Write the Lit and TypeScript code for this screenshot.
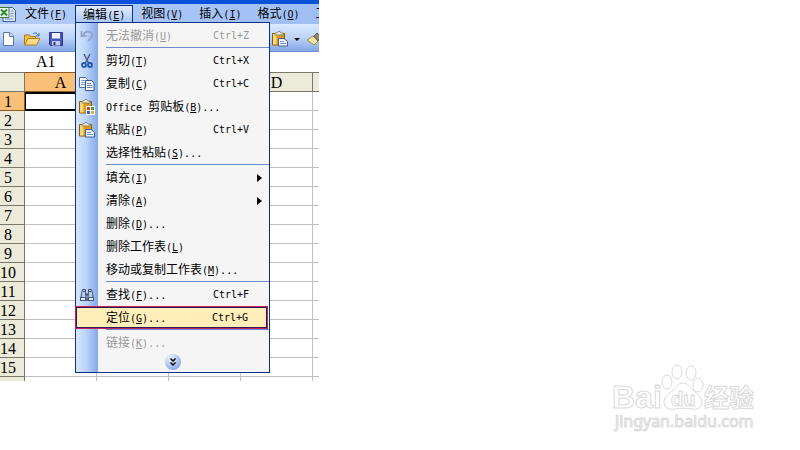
import { LitElement, html, svg, css, nothing } from "lit";
import { customElement } from "lit/decorators.js";
import { classMap } from "lit/directives/class-map.js";

interface Item {
  text: string;
  key: string;
  tail?: string;
  shortcut?: string;
  icon?: string;
  sub?: boolean;
  off?: boolean;
  active?: boolean;
}

const GROUPS: Item[][] = [
  [{ text: "无法撤消", key: "U", shortcut: "Ctrl+Z", icon: "undo", off: true }],
  [
    { text: "剪切", key: "T", shortcut: "Ctrl+X", icon: "cut" },
    { text: "复制", key: "C", shortcut: "Ctrl+C", icon: "copy" },
    { text: "Office 剪贴板", key: "B", tail: "...", icon: "clipboard" },
    { text: "粘贴", key: "P", shortcut: "Ctrl+V", icon: "paste" },
    { text: "选择性粘贴", key: "S", tail: "..." },
  ],
  [
    { text: "填充", key: "I", sub: true },
    { text: "清除", key: "A", sub: true },
    { text: "删除", key: "D", tail: "..." },
    { text: "删除工作表", key: "L" },
    { text: "移动或复制工作表", key: "M", tail: "..." },
  ],
  [
    { text: "查找", key: "F", tail: "...", shortcut: "Ctrl+F", icon: "find" },
    { text: "定位", key: "G", tail: "...", shortcut: "Ctrl+G", active: true },
  ],
  [{ text: "链接", key: "K", tail: "...", off: true }],
];

const board = svg`
  <path d="M.5 2.500h12v11.500H.5z" fill="#d99a26" stroke="#8a5a10"/>
  <path d="M1 3h3.500v10.500H1z" fill="#f9d878"/>
  <path d="M3 4V2h2l1-1.500h2L9 2h2v2z" fill="#e8e4d0" stroke="#77705a" stroke-width=".7"/>`;

const ICONS: Record<string, unknown> = {
  undo: svg`<path d="M2.500 3v5h5" fill="none" stroke="#95a5cd" stroke-width="2"/>
    <path d="M4 7c3-5 9-4 9 0 0 3-2 4-4 6" fill="none" stroke="#95a5cd" stroke-width="2"/>`,
  cut: svg`<path d="M5 1l4.500 9M11 1L6.500 10" fill="none" stroke="#4b5c80" stroke-width="1.500"/>
    <circle cx="5" cy="12" r="2" fill="none" stroke="#2458b0" stroke-width="1.800"/>
    <circle cx="11" cy="12" r="2" fill="none" stroke="#2458b0" stroke-width="1.800"/>`,
  copy: svg`<path d="M.5 1.500h6l2 2v8h-8z" fill="#fff" stroke="#49699f"/>
    <path d="M2 4.500h4M2 6.500h5M2 8.500h5" stroke="#7c9ed6"/>
    <path d="M6.500 4.500h6l2.500 2.500v7.500H6.500z" fill="#fff" stroke="#34558f"/>
    <path d="M8 7.500h4M8 9.500h5.500M8 11.500h5.500" stroke="#5f86c8"/>`,
  clipboard: svg`${board}
    <path d="M7 7h9v9H7z" fill="#fff"/>
    <path d="M8 8h3v3H8z" fill="#d8402a"/><path d="M12 8h3v3h-3z" fill="#48a040"/>
    <path d="M8 12h3v3H8z" fill="#2f66d0"/><path d="M12 12h3v3h-3z" fill="#e8b020"/>`,
  paste: svg`${board}
    <path d="M6.500 7.500h5.500l3.500 3v4.500h-9z" fill="#f4f8ff" stroke="#44608f"/>
    <path d="M8 10.500h4M8 12.500h6" stroke="#6d8fc8"/>`,
  find: svg`<path d="M3.500 2.500h3v3l1 8h-6l1-7zM9.500 2.500h3l1 4 1 7h-6l1-8z" fill="#b9cdf0" stroke="#3c5174"/>
    <path d="M1.500 10.500h5v3h-5zM9.500 10.500h5v3h-5z" fill="#edf3ff" stroke="#3c5174"/>
    <path d="M6.500 6.500h3v2h-3z" fill="#3c5174"/>
    <path d="M4 4.500h2M10 4.500h2" stroke="#3c5174"/>`,
  page: svg`<path d="M3.500 1.500h6.500l3.500 3.500v9.500h-10z" fill="#fff" stroke="#5b78ad"/>
    <path d="M9.500 1.500V5.500h4" fill="#cfdef6" stroke="#5b78ad"/>`,
  open: svg`<path d="M.5 14V4h5l1 1.500h5V8" fill="#f0c050" stroke="#b07c14"/>
    <path d="M.5 14L4 7.500h12L12.500 14z" fill="#ffdb80" stroke="#b07c14"/>
    <path d="M9 3c2-2 4-1 5 1M15 2v3h-3" fill="none" stroke="#3c68b8"/>`,
  save: svg`<path d="M1.500 1.500h13v13h-12l-1-1z" fill="#4a55b8" stroke="#2d378c"/>
    <path d="M4 2h8v5.500H4z" fill="#f2f5ff"/><path d="M4 10h8v4.500H4z" fill="#c4cdec"/>
    <path d="M5.500 11h2v3h-2z" fill="#2d378c"/>`,
  brush: svg`<path d="M1 9l6-4 5 5-4 4z" fill="#f3e6a0" stroke="#a38a3c"/>
    <path d="M8 5l3-3 4 4-3 4z" fill="#8f8a78" stroke="#5d5a4c"/>`,
  excel: svg`<path d="M5 1.500h7.500l3 3v11H3v-4" fill="#dfe9fb" stroke="#3f5f9a"/>
    <path d="M10.500 5h3M10.500 7.500h3M10.500 10h3M5 13h8" stroke="#6e8ec4"/>
    <path d="M-1 1.500h10v10H-1z" fill="#eef6ea" stroke="#3c7a3a"/>
    <path d="M1 3.500l6 6M7 3.500l-6 6" stroke="#2f8a35" stroke-width="2"/>`,
};

const icon = (name: string) =>
  html`<svg class="icon" viewBox="0 0 16 16" aria-hidden="true">${ICONS[name]}</svg>`;

const mixed = (text: string) =>
  text
    .split(/([ -~]+)/)
    .filter(Boolean)
    .map((part) => (/^[ -~]/.test(part) ? html`<span class="latin">${part}</span>` : part));

const label = (text: string, key: string, tail = "") =>
  html`<span class="label">${mixed(text)}<span class="latin">(<u>${key}</u>)${tail}</span></span>`;

const base = css`
  *, *::before { box-sizing: border-box; }
  button {
    margin: 0;
    padding: 0;
    border: 0;
    background: none;
    color: inherit;
    font: inherit;
    text-align: left;
    white-space: nowrap;
  }
  .icon { display: block; width: 16px; height: 16px; flex: none; }
  .latin { font-family: "DejaVu Sans Mono", monospace; font-size: 10px; white-space: pre; }
  u { text-underline-offset: 1px; }
`;

@customElement("edit-menu")
export class EditMenu extends LitElement {
  static styles = [
    base,
    css`
      :host {
        display: block;
        box-sizing: border-box;
        width: 195px;
        padding-top: 1px;
        border: 1px solid #0a2f86;
        background: linear-gradient(90deg, #d5e5fd, #bcd4f8 10px, #84a8e8 22px, #f5f5f5 22px);
      }
      .group + .group::before {
        content: "";
        display: block;
        height: 2px;
        margin-left: 30px;
        border-top: 1px solid #6a8ccb;
      }
      .item {
        display: flex;
        align-items: center;
        width: 100%;
        height: 23px;
        padding: 0 10px 0 3px;
      }
      .item:disabled { color: #989898; }
      .slot { width: 27px; flex: none; }
      .label { flex: 1; }
      .shortcut { width: 46px; }
      .arrow {
        border: 4px solid transparent;
        border-left: 5px solid #000;
        border-right: 0;
        margin-right: -3px;
      }
      .active {
        width: 193px;
        margin-left: -1px;
        padding: 0 9px 0 3px;
        border: 1px solid #c4205a;
        box-shadow: inset 0 0 0 1px #2b1a55;
        background: #ffedba;
      }
      .more { display: flex; justify-content: center; width: 100%; height: 18px; }
      .chevron { width: 16px; height: 16px; }
    `,
  ];

  render() {
    return html`<div role="menu">
      ${GROUPS.map(
        (group) => html`<div class="group" role="group">
          ${group.map(
            (item) => html`<button
              role="menuitem"
              class=${classMap({ item: true, active: !!item.active })}
              ?disabled=${item.off}
            >
              <span class="slot">${item.icon ? icon(item.icon) : nothing}</span>
              ${label(item.text, item.key, item.tail)}
              ${item.shortcut ? html`<span class="shortcut latin">${item.shortcut}</span>` : nothing}
              ${item.sub ? html`<span class="arrow"></span>` : nothing}
            </button>`
          )}
        </div>`
      )}
      <button class="more" aria-label="展开">
        <svg class="chevron" viewBox="0 0 16 16">
          <defs>
            <radialGradient id="ball" cx=".35" cy=".25" r=".8">
              <stop offset="0" stop-color="#edf4ff" /><stop offset="1" stop-color="#84a8e8" />
            </radialGradient>
          </defs>
          <circle cx="8" cy="8" r="8" fill="url(#ball)" />
          <path d="M5.500 4.500L8 7l2.500-2.500M5.500 8.500L8 11l2.500-2.500" fill="none" stroke="#000" stroke-width="1.500" />
        </svg>
      </button>
    </div>`;
  }
}

@customElement("app-root")
export class AppRoot extends LitElement {
  static styles = [
    base,
    css`
      :host {
        display: grid;
        grid-template-columns: minmax(0, 319fr) minmax(0, 481fr);
        min-height: 100vh;
        background: #fff;
        color: #000;
        font: 12px/16px "Noto Sans CJK SC", sans-serif;
      }
      .bars { overflow: hidden; }
      .window { position: relative; min-width: 0; }
      .title { height: 4px; background: #0a50d8; }
      .menubar {
        display: flex;
        height: 20px;
        padding-top: 1px;
        background: linear-gradient(90deg, #b4cdf7, #9ebef5);
      }
      .app { width: 17px; flex: none; padding-top: 1px; }
      .entry { flex: none; height: 18px; padding: 0 8px; }
      .open {
        border: 1px solid #0a2f86;
        border-bottom: 0;
        padding: 0 7px;
        background: linear-gradient(#e2edff, #a9c6f5);
      }
      .toolbar {
        display: flex;
        justify-content: space-between;
        height: 28px;
        padding-top: 2px;
        background: linear-gradient(#dbe9fe, #bcd3f8 50%, #84a8e6 95%, #5c82c8);
      }
      .tools { display: flex; align-items: center; gap: 8px; }
      .end { width: 47px; gap: 6px; flex: none; overflow: hidden; }
      .drop { border: 3px solid transparent; border-top-color: #000; border-bottom: 0; flex: none; }
      .namebox {
        display: block;
        width: 100%;
        height: 20px;
        border: 0;
        padding: 0 0 0 36px;
        background: #fff;
        font: 16px/20px "Liberation Serif", serif;
      }
      .popup { position: absolute; top: 22px; left: 75px; z-index: 1; }
      .sheet {
        width: 100%;
        table-layout: fixed;
        border-spacing: 0;
        font: 16px/16px "Liberation Serif", serif;
      }
      th, td { padding: 0; height: 19px; border: solid #c0c0c0; border-width: 0 1px 1px 0; overflow: hidden; }
      th {
        padding-top: 2px;
        background: #ecead9;
        border-color: #77776a;
        font-weight: normal;
        text-align: center;
      }
      thead th { height: 20px; border-top: 1px solid #77776a; }
      tbody th { padding-right: 8px; }
      .hot { background: #fbc077; border-color: #8a5a20; }
      td.cursor { border: 2px solid #000; border-left-width: 1px; }
      .rowhead { width: 25px; }
      .col { width: 72px; }
      .last th, .last td { height: 4px; border-bottom: 0; }
      .rest { border-right: 0; }
      .side { display: flex; align-items: flex-end; justify-content: flex-end; padding: 0 40px 14px 0; }
      .mark { width: 150px; height: 76px; }
      .mark text, .mark .pad { fill: #fff; stroke: #dadada; stroke-width: 1; }
      .latin-logo { font: bold 32px "Liberation Sans", sans-serif; }
      .du { font: bold 20px "Liberation Sans", sans-serif; }
      .cjk-logo { font: bold 25px "Noto Sans CJK SC", sans-serif; }
      .site { font: 16px "Noto Sans", sans-serif; }
    `,
  ];

  render() {
    const menus = [["文件", "F"], ["编辑", "E"], ["视图", "V"], ["插入", "I"], ["格式", "O"], ["工具", "T"]];
    const cols = ["A", "", "", "D"];
    const rows = Array.from({ length: 15 }, (_, i) => i + 1);
    return html`
      <main class="window">
        <div class="bars">
          <div class="title"></div>
          <nav class="menubar">
            <span class="app">${icon("excel")}</span>
            ${menus.map(
              ([text, key]) => html`<button class=${classMap({ entry: true, open: key === "E" })}>
                ${label(text, key)}
              </button>`
            )}
          </nav>
          <div class="toolbar">
            <div class="tools">
              <button aria-label="新建">${icon("page")}</button>
              <button aria-label="打开">${icon("open")}</button>
              <button aria-label="保存">${icon("save")}</button>
              <button aria-label="权限">${icon("page")}</button>
            </div>
            <div class="tools end">
              <button aria-label="粘贴">${icon("paste")}</button>
              <span class="drop"></span>
              <button aria-label="格式刷">${icon("brush")}</button>
            </div>
          </div>
          <input class="namebox" aria-label="名称框" value="A1" />
        </div>
        <edit-menu class="popup"></edit-menu>
        <table class="sheet">
          <colgroup>
            <col class="rowhead" />
            ${cols.map(() => html`<col class="col" />`)}
            <col />
          </colgroup>
          <thead>
            <tr>
              <th></th>
              ${cols.map((c) => html`<th class=${classMap({ hot: c === "A" })}>${c}</th>`)}
              <th class="rest"></th>
            </tr>
          </thead>
          <tbody>
            ${rows.map(
              (n) => html`<tr>
                <th class=${classMap({ hot: n === 1 })}>${n}</th>
                ${cols.map((c) => html`<td class=${classMap({ cursor: n === 1 && c === "A" })}></td>`)}
                <td class="rest"></td>
              </tr>`
            )}
            <tr class="last">
              <th></th>
              ${cols.map(() => html`<td></td>`)}
              <td class="rest"></td>
            </tr>
          </tbody>
        </table>
      </main>
      <aside class="side">
        <svg class="mark" viewBox="0 0 150 76" role="img" aria-label="Baidu 经验">
          <text class="latin-logo" x="2" y="48">Bai</text>
          <path class="pad" d="M73 23c-5 0-7 4-10 7-4 4-9 7-9 12 0 6 5 8 10 7 6-1 12-1 18 0 5 1 10-1 10-7 0-5-5-8-9-12-3-3-5-7-10-7z" />
          <ellipse class="pad" cx="57" cy="22" rx="5" ry="7" />
          <ellipse class="pad" cx="67" cy="12" rx="5" ry="7" />
          <ellipse class="pad" cx="81" cy="13" rx="5" ry="7" />
          <ellipse class="pad" cx="88" cy="25" rx="5" ry="7" />
          <text class="du" x="61" y="46">du</text>
          <text class="cjk-logo" x="94" y="47">经验</text>
          <text class="site" x="5" y="67">jingyan.baidu.com</text>
        </svg>
      </aside>
    `;
  }
}
